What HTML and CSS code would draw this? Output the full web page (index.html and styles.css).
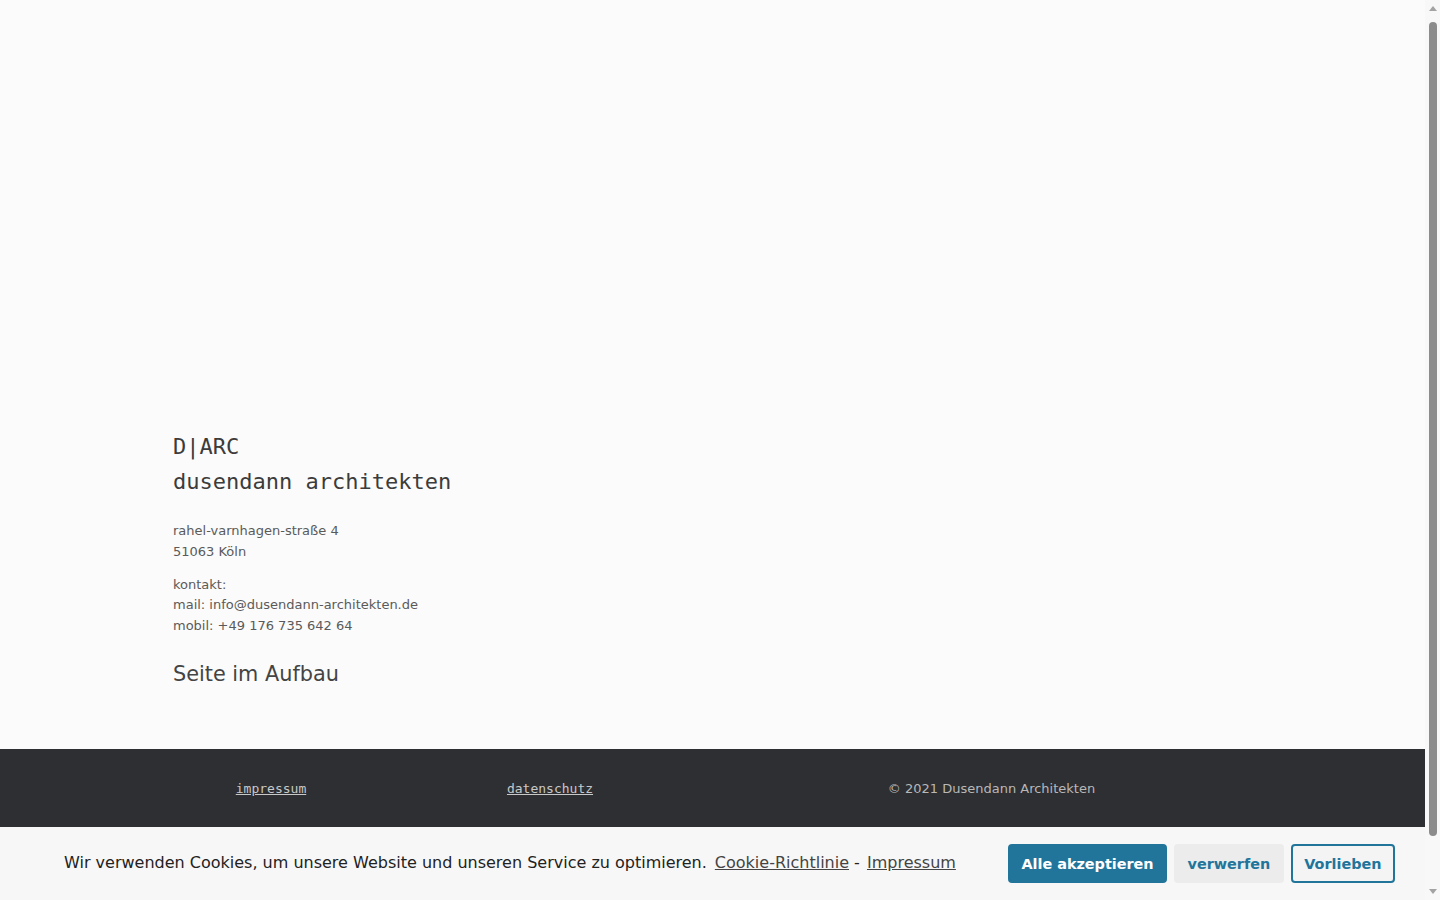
FILE: index.html
```html
<!DOCTYPE html>
<html lang="de">
<head>
<meta charset="utf-8">
<title>D|ARC dusendann architekten</title>
<link rel="stylesheet" href="styles.css">
</head>
<body>
<div class="page">
  <main class="main">
    <div class="container">
      <h1 class="brand"><span>D|ARC</span><span>dusendann architekten</span></h1>
      <p class="info">rahel-varnhagen-straße 4<br>51063 Köln</p>
      <p class="info">kontakt:<br>mail: info@dusendann-architekten.de<br>mobil: +49 176 735 642 64</p>
      <h2 class="status">Seite im Aufbau</h2>
    </div>
  </main>
  <footer class="footer">
    <div class="container footer-grid">
      <a class="flink" href="#">impressum</a>
      <a class="flink" href="#">datenschutz</a>
      <span class="copy">© 2021 Dusendann Architekten</span>
    </div>
  </footer>
</div>
<div class="cookie">
  <p class="cookie-text">Wir verwenden Cookies, um unsere Website und unseren Service zu optimieren.<a class="clink first" href="#">Cookie-Richtlinie</a> - <a class="clink second" href="#">Impressum</a></p>
  <div class="cookie-btns">
    <button class="btn btn-accept">Alle akzeptieren</button>
    <button class="btn btn-deny">verwerfen</button>
    <button class="btn btn-pref">Vorlieben</button>
  </div>
</div>
<div class="scrollbar" aria-hidden="true">
  <span class="sb-arrow sb-up"></span>
  <span class="sb-thumb"></span>
  <span class="sb-arrow sb-down"></span>
</div>
</body>
</html>
```
FILE: styles.css
```css
html, body {
  margin: 0;
  padding: 0;
}
body {
  background: #fbfbfb;
  font-family: "DejaVu Sans", sans-serif;
  color: #555;
}
.page {
  width: 1425px;
  padding-bottom: 134px;
}
.container {
  width: 1079px;
  margin: 0 auto;
}
.main {
  padding-top: 429px;
  padding-bottom: 63px;
}
.brand {
  margin: 0;
  font-family: "DejaVu Sans Mono", monospace;
  font-weight: normal;
  font-size: 22px;
  line-height: 35px;
  color: #3c3c3c;
  display: flex;
  flex-direction: column;
}
.info {
  margin: 22px 0 0;
  font-size: 13px;
  line-height: 20.8px;
  color: #5a5a5a;
}
.info + .info {
  margin-top: 12px;
}
.status {
  margin: 25px 0 0;
  font-weight: normal;
  font-size: 20.8px;
  line-height: 24px;
  color: #444;
}
.footer {
  background: #2e2f33;
  height: 78px;
  display: flex;
  align-items: center;
  padding-top: 1px;
  box-sizing: border-box;
}
.footer-grid {
  display: grid;
  grid-template-columns: 196px 362px 521px;
  align-items: center;
  justify-items: center;
}
.flink {
  font-family: "DejaVu Sans Mono", monospace;
  font-size: 13px;
  color: #c8c8c8;
  text-decoration: underline;
}
.copy {
  font-size: 13px;
  color: #b8b8b8;
}
.cookie {
  position: fixed;
  left: 0;
  right: 15px;
  bottom: 0;
  height: 73px;
  background: #f7f7f7;
  display: flex;
  align-items: center;
  justify-content: space-between;
  padding: 0 30px 0 64px;
  box-sizing: border-box;
}
.cookie-text {
  margin: 0 0 2px;
  font-size: 16px;
  color: #222;
  line-height: 24px;
  white-space: nowrap;
}
.clink {
  color: #444;
  text-decoration: underline;
}
.clink.first {
  margin-left: 8px;
}
.clink.second {
  margin-left: 2px;
}
.cookie-btns {
  display: flex;
  gap: 7px;
}
.btn {
  font-family: "DejaVu Sans", sans-serif;
  font-weight: bold;
  font-size: 14.4px;
  height: 39px;
  padding: 0 11.5px;
  border-radius: 4px;
  border: 2px solid transparent;
  white-space: nowrap;
  cursor: pointer;
}
.btn-accept {
  background: #21759b;
  border-color: #21759b;
  color: #fff;
}
.btn-deny {
  background: #ececec;
  border-color: #ececec;
  color: #21759b;
}
.btn-pref {
  background: #f4f4f4;
  border-color: #21759b;
  color: #21759b;
}
.scrollbar {
  position: fixed;
  top: 0;
  right: 0;
  width: 15px;
  height: 100%;
  background: #f8f8f8;
  display: flex;
  flex-direction: column;
  align-items: center;
}
.sb-arrow {
  width: 0;
  height: 0;
  border-left: 4px solid transparent;
  border-right: 4px solid transparent;
  margin: 6px 0;
}
.sb-up {
  border-bottom: 5px solid #a3a3a3;
}
.sb-down {
  border-top: 5px solid #a3a3a3;
  margin-top: auto;
}
.sb-thumb {
  width: 8px;
  height: 814px;
  margin-top: 5px;
  margin-left: 1px;
  background: #8c8c8c;
  border-radius: 4px;
}
```
